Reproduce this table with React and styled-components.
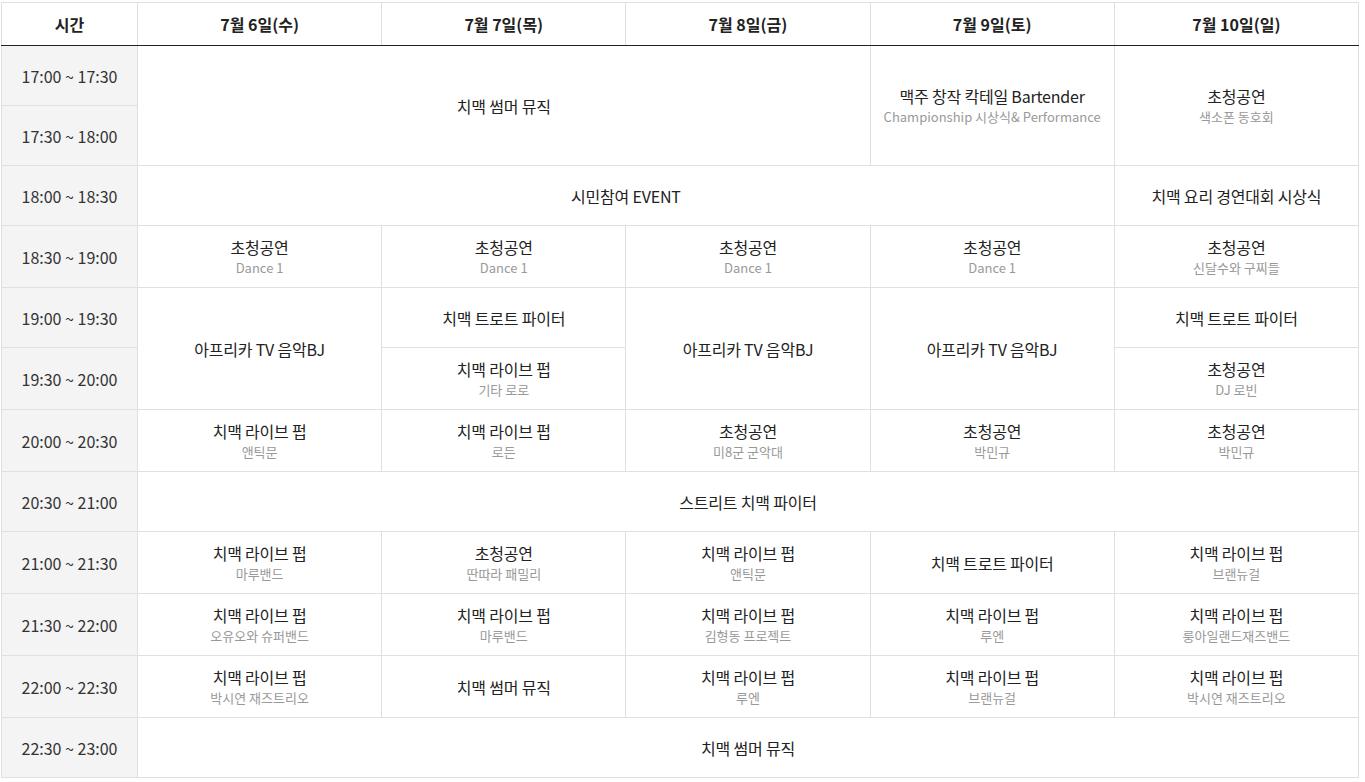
import styled, { createGlobalStyle } from "styled-components"

const GlobalStyle = createGlobalStyle`
    html, body {
        margin: 0;
        padding: 0;
        background: #fff;
    }
    body {
        font-family: "Noto Sans CJK KR", "Noto Sans", sans-serif;
        color: #333;
    }
`

const Wrap = styled.div`
    padding: 2px 0 0 1px;
`
const Table = styled.table`
    width: 1358px;
    border-collapse: collapse;
    table-layout: fixed;
    border: 1px solid #e0e0e0;
    text-align: center;
`
const Th = styled.th`
    height: 42px;
    padding: 0;
    font-size: 16px;
    font-weight: 700;
    color: #222;
    border: 1px solid #e0e0e0;
    border-bottom: 1px solid #222;
    background: #fff;
`
const TimeCell = styled.td`
    height: 59px;
    padding: 0;
    font-size: 16px;
    color: #333;
    background: #f4f4f4;
    border: 1px solid #e0e0e0;
`
const Cell = styled.td`
    height: 59px;
    padding: 10px 6px;
    box-sizing: border-box;
    border: 1px solid #e0e0e0;
    vertical-align: middle;
`
const Title = styled.div`
    font-size: 16px;
    line-height: 22px;
    color: #222;
    letter-spacing: -0.2px;
`
const Sub = styled.div`
    font-size: 13px;
    line-height: 19px;
    color: #999;
`

const days = ["7월 6일(수)", "7월 7일(목)", "7월 8일(금)", "7월 9일(토)", "7월 10일(일)"]

const pub = (sub) => ({ t: "치맥 라이브 펍", s: sub })
const guest = (sub) => ({ t: "초청공연", s: sub })

const rows = [
    { time: "17:00 ~ 17:30", cells: [
        { t: "치맥 썸머 뮤직", c: 3, r: 2 },
        { t: "맥주 창작 칵테일 Bartender", s: "Championship 시상식& Performance", r: 2 },
        { ...guest("색소폰 동호회"), r: 2 },
    ] },
    { time: "17:30 ~ 18:00", cells: [] },
    { time: "18:00 ~ 18:30", cells: [
        { t: "시민참여 EVENT", c: 4 },
        { t: "치맥 요리 경연대회 시상식" },
    ] },
    { time: "18:30 ~ 19:00", cells: [
        guest("Dance 1"), guest("Dance 1"), guest("Dance 1"), guest("Dance 1"), guest("신달수와 구찌들"),
    ] },
    { time: "19:00 ~ 19:30", cells: [
        { t: "아프리카 TV 음악BJ", r: 2 },
        { t: "치맥 트로트 파이터" },
        { t: "아프리카 TV 음악BJ", r: 2 },
        { t: "아프리카 TV 음악BJ", r: 2 },
        { t: "치맥 트로트 파이터" },
    ] },
    { time: "19:30 ~ 20:00", cells: [pub("기타 로로"), guest("DJ 로빈")] },
    { time: "20:00 ~ 20:30", cells: [
        pub("앤틱문"), pub("로든"), guest("미8군 군악대"), guest("박민규"), guest("박민규"),
    ] },
    { time: "20:30 ~ 21:00", cells: [{ t: "스트리트 치맥 파이터", c: 5 }] },
    { time: "21:00 ~ 21:30", cells: [
        pub("마루밴드"), guest("딴따라 패밀리"), pub("앤틱문"), { t: "치맥 트로트 파이터" }, pub("브랜뉴걸"),
    ] },
    { time: "21:30 ~ 22:00", cells: [
        pub("오유오와 슈퍼밴드"), pub("마루밴드"), pub("김형동 프로젝트"), pub("루엔"), pub("룽아일랜드재즈밴드"),
    ] },
    { time: "22:00 ~ 22:30", cells: [
        pub("박시연 재즈트리오"), { t: "치맥 썸머 뮤직" }, pub("루엔"), pub("브랜뉴걸"), pub("박시연 재즈트리오"),
    ] },
    { time: "22:30 ~ 23:00", cells: [{ t: "치맥 썸머 뮤직", c: 5 }] },
]

export default function App() {
    return (
        <Wrap>
            <GlobalStyle />
            <Table>
                <colgroup>
                    <col style={{ width: 136 }} />
                    {days.map((d) => <col key={d} />)}
                </colgroup>
                <thead>
                    <tr>
                        <Th>시간</Th>
                        {days.map((d) => <Th key={d}>{d}</Th>)}
                    </tr>
                </thead>
                <tbody>
                    {rows.map((row) => (
                        <tr key={row.time}>
                            <TimeCell>{row.time}</TimeCell>
                            {row.cells.map((cell, i) => (
                                <Cell key={i} colSpan={cell.c || 1} rowSpan={cell.r || 1}>
                                    <Title>{cell.t}</Title>
                                    {cell.s && <Sub>{cell.s}</Sub>}
                                </Cell>
                            ))}
                        </tr>
                    ))}
                </tbody>
            </Table>
        </Wrap>
    )
}
